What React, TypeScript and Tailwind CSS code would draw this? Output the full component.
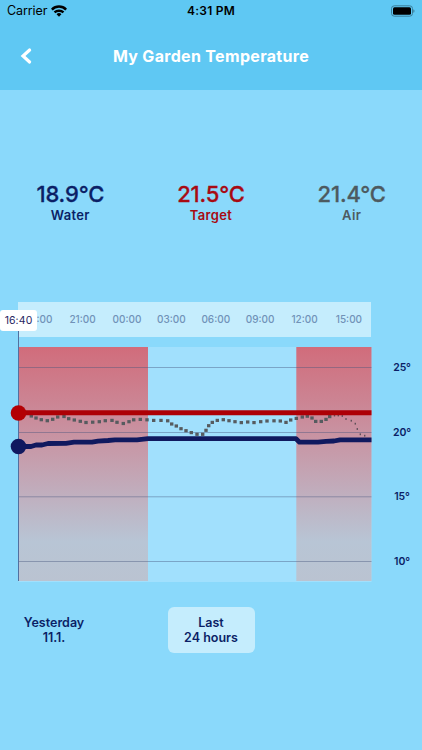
import { useState } from 'react';

const readings = [
    { label: 'Water', value: '18.9°C', color: 'text-[#0b1f66]' },
    { label: 'Target', value: '21.5°C', color: 'text-[#a80a12]' },
    { label: 'Air', value: '21.4°C', color: 'text-[#4d5a60]' },
];

const hours = ['18:00', '21:00', '00:00', '03:00', '06:00', '09:00', '12:00', '15:00'];
const degrees = ['25°', '20°', '15°', '10°'];
const gridLines = [20.5, 85.5, 149.8, 214.5];

// [x, y] of the air samples, y measured from the top of the plot
const airDots = [
    [31.3, 69], [36, 71], [41.3, 72.7], [47.3, 73.7], [52.7, 72.3], [57.7, 70], [64, 69.5], [68.7, 71.7],
    [74.3, 73], [80.3, 74.3], [86, 75.5], [92.7, 75.2], [99.3, 74.7], [105.3, 73.7], [112, 73.4], [117, 75.3],
    [123.3, 76.5], [129, 74.7], [133.7, 72.8], [140.3, 72.4], [147, 72.8], [153.7, 73.4], [161, 73.4],
    [167.7, 73.8], [171.7, 77], [176.3, 79], [181, 81.7], [186, 83.7], [191.3, 85.6], [197, 87.3],
    [202.7, 87.3], [206, 83.3], [208.7, 78.7], [212.3, 75.4], [217.3, 73.4], [223.3, 72.7], [229, 73.7],
    [235, 74.7], [241.3, 75.6], [247.7, 75], [254, 75.6], [260.7, 74.7], [267, 74], [274, 73.8],
    [280.3, 74], [286, 75.4], [290.7, 73], [296.3, 71.4], [302.3, 70], [307.3, 69.2], [312, 71],
    [315.7, 74.4], [321.3, 74.4], [326, 72.4], [329.7, 69.6],
];
const fadingDots = [
    [334.5, 68.6], [338.3, 68.5], [342.3, 69], [346, 72], [351.3, 73.7], [355.3, 76.7], [357.3, 82],
    [360.3, 87.3], [364.7, 88.7],
];

function StatusBar() {
    return (
        <div className="h-[22px] grid grid-cols-3 items-center px-[7px] text-black">
            <div className="flex items-center gap-[4px]">
                <span className="text-[12.5px] leading-none -tracking-[0.1px]">Carrier</span>
                <svg width="16" height="12" viewBox="0 0 15 11" fill="none" stroke="currentColor" strokeWidth="2.3">
                    <path d="M0.8 4.1a9.5 9.5 0 0 1 13.4 0" />
                    <path d="M3.3 6.9a6 6 0 0 1 8.4 0" />
                    <path d="M7.5 10.9 5.2 8.6a3.3 3.3 0 0 1 4.6 0z" fill="currentColor" stroke="none" />
                </svg>
            </div>
            <span className="text-center text-[12px] leading-none font-semibold tracking-[0.25px] whitespace-nowrap">4:31 PM</span>
            <svg className="justify-self-end" width="24" height="12" viewBox="0 0 24 12">
                <rect x="0.5" y="0.8" width="21" height="10.4" rx="2.8" fill="none" stroke="#3a7f9c" />
                <rect x="2" y="2.3" width="18" height="7.4" rx="1.5" />
                <path d="M22.5 4.2c1.2.5 1.2 3.1 0 3.6z" fill="#2f6479" />
            </svg>
        </div>
    );
}

function Plot() {
    return (
        <svg className="block overflow-visible" width="372" height="235" viewBox="0 0 372 235">
            <defs>
                <linearGradient id="heating" x1="0" y1="0" x2="0" y2="1">
                    <stop offset="0" stopColor="#d16c7b" />
                    <stop offset="0.5" stopColor="#c5a0af" />
                    <stop offset="0.83" stopColor="#b8c5d5" />
                    <stop offset="1" stopColor="#bac3d1" />
                </linearGradient>
            </defs>
            <rect x="18.5" y="0" width="353" height="235" fill="#a1e0fd" />
            <rect x="18.5" y="0" width="129.5" height="234" fill="url(#heating)" />
            <rect x="296.3" y="0" width="75.2" height="234" fill="url(#heating)" />
            {gridLines.map((y) => (
                <line key={y} x1="18" x2="371.5" y1={y} y2={y} stroke="#46537c" strokeOpacity="0.42" />
            ))}
            <line x1="18.5" x2="18.5" y1="-17" y2="234" stroke="#52709f" />

            {airDots.map(([x, y]) => (
                <rect key={x} x={x - 1.7} y={y - 1.6} width="3.4" height="3.2" fill="#565b5f" />
            ))}
            {fadingDots.map(([x, y]) => (
                <rect key={x} x={x - 0.7} y={y - 0.9} width="1.4" height="1.8" fill="#5f5059" />
            ))}

            <line x1="18.5" x2="371.5" y1="65.8" y2="65.8" stroke="#ad0006" strokeWidth="5" />
            <path
                d="M18.5 99.5H31L36 98H42L48 96.5L66 96.3L74 95.2H92L98 94.2L108 93.5L115 92.8H137L148 91.7H296L299.5 95.2H318L326 94.3L334 94L340 92.8H371.5"
                fill="none"
                stroke="#10195f"
                strokeWidth="4.8"
                strokeLinejoin="round"
            />
            <circle cx="18.5" cy="66" r="7.8" fill="#b30004" />
            <circle cx="18.5" cy="99.5" r="7.8" fill="#10195f" />
        </svg>
    );
}

export default function App() {
    const [range, setRange] = useState('last');
    const rangeClass = 'h-[46px] rounded-[6px] text-center text-[12.5px] leading-[15px] font-semibold';

    return (
        <div className="w-[422px] h-[750px] overflow-hidden bg-[#8ad9fb] font-[Inter,sans-serif] text-[#0b1f66]">
            <header className="h-[90px] bg-[#5fc8f3]">
                <StatusBar />
                <div className="h-[68px] grid grid-cols-[52px_1fr_52px] items-center">
                    <button aria-label="Back" className="flex justify-center">
                        <svg width="12" height="18" viewBox="0 0 12 18" fill="none" stroke="white" strokeWidth="3.2">
                            <path d="M9.6 3 3 9l6.6 6" strokeLinecap="round" />
                        </svg>
                    </button>
                    <h1 className="text-center text-[16px] font-bold text-white tracking-[0.32px] whitespace-nowrap">
                        My Garden Temperature
                    </h1>
                </div>
            </header>

            {/* Current readings */}
            <section className="mt-[91px] h-[121px] grid grid-cols-3">
                {readings.map((r) => (
                    <div key={r.label} className={`text-center font-semibold ${r.color}`}>
                        <p className="pt-px text-[22px] leading-[25px] font-medium -tracking-[0.15px] [-webkit-text-stroke:0.3px]">{r.value}</p>
                        <p className="text-[13px] leading-[17px] tracking-[0.35px]">{r.label}</p>
                    </div>
                ))}
            </section>

            {/* Chart */}
            <section className="flex">
                <div className="relative w-[372px]">
                    <div className="ml-[18px] mr-[1px] h-[35px] bg-[#c5edfd] flex items-center pb-px">
                        {hours.map((h, i) => (
                            <span
                                key={h}
                                className={`shrink-0 text-center text-[10px] font-medium text-[#7092b8] ${i === 0 ? 'w-[42.4px]' : 'w-[44.4px]'}`}
                            >
                                {h}
                            </span>
                        ))}
                    </div>
                    <div className="mt-[10px]">
                        <Plot />
                    </div>
                    <div className="absolute left-0 top-[8px] w-[37px] h-[21px] rounded-[3px] bg-white flex items-center justify-center text-[10.5px] tracking-[0.1px] text-[#27265f]">
                        16:40
                    </div>
                </div>
                <div className="flex-1 pt-[34px] pl-[10px] text-center text-[10.5px] font-semibold -tracking-[0.1px]">
                    {degrees.map((d) => (
                        <div key={d} className="h-[64.7px] leading-[64.7px]">{d}</div>
                    ))}
                </div>
            </section>

            {/* Range picker */}
            <nav className="mt-[12px] flex gap-[59.5px]">
                <button onClick={() => setRange('yesterday')} className={`w-[108px] ${rangeClass} ${range === 'yesterday' ? 'bg-[#c5edfd]' : ''}`}>
                    Yesterday
                    <br />
                    11.1.
                </button>
                <button onClick={() => setRange('last')} className={`w-[87px] ${rangeClass} ${range === 'last' ? 'bg-[#c5edfd]' : ''}`}>
                    Last
                    <br />
                    24 hours
                </button>
            </nav>
        </div>
    );
}
